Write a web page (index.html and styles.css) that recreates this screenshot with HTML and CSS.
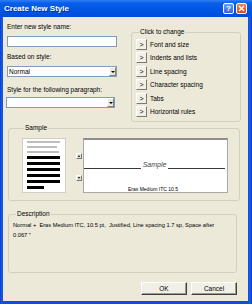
FILE: index.html
```html
<!DOCTYPE html>
<html>
<head>
<meta charset="utf-8">
<title>Create New Style</title>
<link rel="stylesheet" href="styles.css">
</head>
<body>
<div class="window">
  <div class="titlebar">
    <span class="title">Create New Style</span>
    <span class="tb-btn help">?</span>
    <span class="tb-btn close">
      <svg width="7" height="7" viewBox="0 0 7 7"><path d="M1 1 L6 6 M6 1 L1 6" stroke="#fff" stroke-width="1.4" fill="none"/></svg>
    </span>
  </div>
  <div class="client">
    <div class="top">
      <div class="left">
        <div class="lbl l1">Enter new style name:</div>
        <div class="input"></div>
        <div class="lbl l2">Based on style:</div>
        <div class="select s1"><span class="val">Normal</span><span class="drop"><i class="tri down"></i></span></div>
        <div class="lbl l3">Style for the following paragraph:</div>
        <div class="select s2"><span class="val"></span><span class="drop"><i class="tri down"></i></span></div>
      </div>
      <fieldset class="group change">
        <legend>Click to change</legend>
        <div class="row"><span class="gt">&gt;</span><span>Font and size</span></div>
        <div class="row"><span class="gt">&gt;</span><span>Indents and lists</span></div>
        <div class="row"><span class="gt">&gt;</span><span>Line spacing</span></div>
        <div class="row"><span class="gt">&gt;</span><span>Character spacing</span></div>
        <div class="row"><span class="gt">&gt;</span><span>Tabs</span></div>
        <div class="row"><span class="gt">&gt;</span><span>Horizontal rules</span></div>
      </fieldset>
    </div>
    <fieldset class="group sample">
      <legend>Sample</legend>
      <div class="sample-row">
        <div class="thumb">
          <i class="ln gray w33"></i>
          <i class="ln gray w30"></i>
          <i class="ln gray w32"></i>
          <i class="ln blk w33"></i>
          <i class="ln blk w33"></i>
          <i class="ln blk w33"></i>
          <i class="ln blk w33"></i>
          <i class="ln blk w33"></i>
          <i class="ln blk w17"></i>
        </div>
        <div class="spin">
          <span class="sbtn up"><i class="tri upt"></i></span>
          <span class="sbtn dn"><i class="tri down"></i></span>
        </div>
        <div class="preview">
          <div class="pline"><span class="rule"></span><span class="stxt">Sample</span><span class="rule"></span></div>
          <div class="fontname">Eras Medium ITC 10.5</div>
        </div>
      </div>
    </fieldset>
    <fieldset class="group desc">
      <legend>Description</legend>
      <p class="desc-text">Normal +&nbsp; Eras Medium ITC, 10.5 pt,&nbsp; Justified, Line spacing 1.7 sp, Space after<br>0.067 "</p>
    </fieldset>
    <div class="actions">
      <button class="btn">OK</button>
      <button class="btn">Cancel</button>
    </div>
  </div>
</div>
</body>
</html>
```

FILE: styles.css
```css
* { box-sizing: border-box; }
html, body { margin: 0; padding: 0; }
body {
  width: 252px;
  height: 304px;
  overflow: hidden;
  background: #0A4DE0;
  font-family: "Liberation Sans", Arial, sans-serif;
  font-size: 6.5px;
  color: #000;
}
.window {
  display: flex;
  flex-direction: column;
  height: 304px;
  background: linear-gradient(90deg, #0840C8 0, #1A5CF0 2px, #0A4DE0 3px, #0A4DE0 248px, #1A5CF0 250px, #0838B8 252px);
}
.titlebar {
  height: 17px;
  flex: none;
  display: flex;
  align-items: center;
  padding: 0 5px 0 4px;
  background: linear-gradient(#2F80F5 0, #0A5EE8 3px, #0056E4 55%, #004CDA 100%);
}
.title {
  flex: 1;
  color: #fff;
  font-weight: bold;
  font-size: 8px;
  line-height: 10px;
  text-shadow: 1px 1px 0 #0A2F95;
}
.tb-btn {
  width: 11px;
  height: 11px;
  border: 1px solid #fff;
  border-radius: 2px;
  display: flex;
  align-items: center;
  justify-content: center;
  color: #fff;
  font-weight: bold;
  font-size: 8px;
  line-height: 9px;
}
.help { background: linear-gradient(#6AA2F7, #2B66E2); margin-right: 2px; }
.close { background: linear-gradient(#EE8563, #D8461E); }

.client {
  flex: 1;
  margin: 0 4px 3px 3px;
  background: #ECE9D8;
  display: flex;
  flex-direction: column;
}
.top { display: flex; align-items: flex-start; padding-left: 4px; }
.left { width: 110px; padding-top: 6px; }
.lbl { line-height: 8px; white-space: nowrap; }
.l2 { margin-top: 6px; }
.l3 { margin-top: 9px; }
.input {
  height: 11px;
  margin-top: 5px;
  background: #fff;
  border: 1px solid #7F9DB9;
}
.select {
  height: 11px;
  margin-top: 5px;
  background: #fff;
  border: 1px solid #7F9DB9;
  display: flex;
  align-items: center;
}
.s2 { margin-top: 3px; margin-left: -1px; width: 109px; }
.val { flex: 1; padding-left: 1px; line-height: 8px; }
.drop {
  width: 7px;
  height: 9px;
  background: #ECE9D8;
  border: 1px solid;
  border-color: #fff #808080 #808080 #fff;
  display: flex;
  align-items: center;
  justify-content: center;
}
.tri { display: block; width: 0; height: 0; border-left: 2px solid transparent; border-right: 2px solid transparent; }
.tri.down { border-top: 2px solid #000; }
.tri.upt { border-bottom: 2px solid #000; }

fieldset.group {
  margin: 0;
  padding: 0;
  min-width: 0;
  border: 1px solid #D0D0BF;
  border-radius: 3px;
}
fieldset.group legend {
  padding: 0 1px;
  line-height: 8px;
  font-size: 6.5px;
}
.change {
  margin-left: 14px !important;
  margin-top: 11px !important;
  width: 110px;
  padding: 2.5px 4px 4px 4px !important;
  display: flex;
  flex-direction: column;
  gap: 2.6px;
}
.change legend { margin-left: 3px; }
.row { display: flex; align-items: center; height: 11px; gap: 3px; white-space: nowrap; }
.gt {
  width: 11px;
  height: 11px;
  flex: none;
  background: #F2F0E6;
  border: 1px solid;
  border-color: #fff #7A7A70 #7A7A70 #fff;
  display: flex;
  align-items: center;
  justify-content: center;
  font-size: 7px;
  line-height: 7px;
}

.sample {
  margin: 2px 0 0 5px !important;
  width: 232px;
  padding: 6px 0 7px 13px !important;
}
.sample legend { margin-left: 2px; }
.sample-row { display: flex; }
.thumb {
  width: 44px;
  height: 55px;
  background: #fff;
  border: 1px solid #CFCFC8;
  padding: 2px 0 0 4px;
  display: flex;
  flex-direction: column;
  gap: 3px;
}
.ln { display: block; flex: none; }
.ln.gray { height: 2px; background: #BDBDBD; }
.ln.blk { height: 3px; background: #000; }
.w33 { width: 33px; }
.w30 { width: 30px; }
.w32 { width: 32px; }
.w17 { width: 17px; }
.spin { width: 7px; margin-left: 10px; display: flex; flex-direction: column; }
.sbtn {
  width: 6px;
  height: 6px;
  background: #E4E1D4;
  border: 1px solid;
  border-color: #fff #7A7A70 #7A7A70 #fff;
  display: flex;
  align-items: center;
  justify-content: center;
}
.sbtn .tri { border-left-width: 1.5px; border-right-width: 1.5px; }
.up { margin-top: 15px; }
.dn { margin-top: 16px; }
.preview {
  width: 145px;
  height: 55px;
  background: #fff;
  border: 1px solid #A8A8A8;
  border-top: 2px solid #8E8E8E;
  padding: 22px 2px 0 0;
}
.pline { display: flex; align-items: flex-end; height: 7px; }
.rule { flex: 1; border-bottom: 1px solid #3A3A3A; }
.stxt {
  font-style: italic;
  font-size: 7px;
  line-height: 7px;
  color: #444;
  padding: 0 2px;
  position: relative;
  top: -1px;
}
.fontname {
  margin-top: 17px;
  padding-left: 44px;
  font-size: 5px;
  line-height: 6px;
  white-space: nowrap;
}

.desc {
  margin: 9px 0 0 5px !important;
  width: 229px;
  padding: 2px 4px 32px 4px !important;
}
.desc legend { margin-left: 3px; }
.desc-text {
  margin: 0;
  font-size: 5.7px;
  line-height: 10px;
  white-space: nowrap;
}

.actions {
  display: flex;
  justify-content: flex-end;
  gap: 4px;
  margin-top: 9px;
  padding-right: 11px;
}
.btn {
  width: 46px;
  height: 13px;
  padding: 0;
  margin: 0;
  background: #F2F0E6;
  border: 1px solid;
  border-color: #fff #404040 #404040 #fff;
  box-shadow: inset -1px -1px 0 #9A9A90;
  font-family: "Liberation Sans", Arial, sans-serif;
  font-size: 6.5px;
  color: #000;
}
```
